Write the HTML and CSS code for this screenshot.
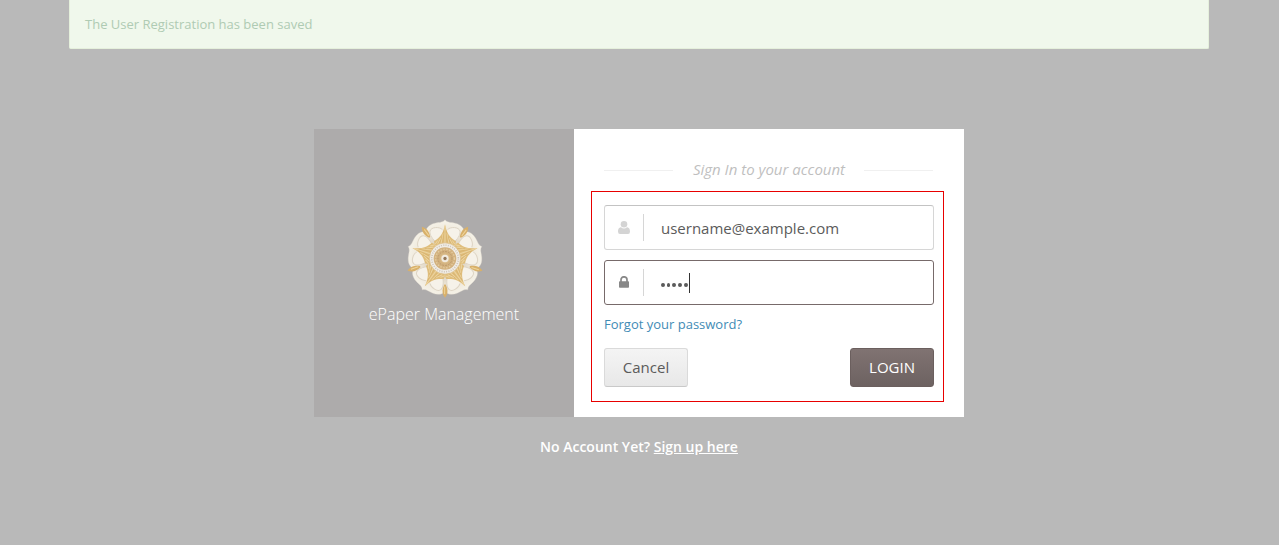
FILE: index.html
```html
<!DOCTYPE html>
<html lang="en">
<head>
<meta charset="utf-8">
<title>ePaper Management</title>
<link rel="stylesheet" href="styles.css">
</head>
<body>
<div class="alert">The User Registration has been saved</div>
<main class="card">
  <section class="brand">
    <svg class="logo" viewBox="-135 -135 270 270" aria-label="Rose emblem">
      <defs>
        <radialGradient id="cream" gradientUnits="userSpaceOnUse" cx="0" cy="0" r="116">
          <stop offset=".45" stop-color="#dfd5c3"/><stop offset=".8" stop-color="#f1ece0"/><stop offset="1" stop-color="#f6f3e9"/>
        </radialGradient>
        <g id="petal">
          <path d="M0-116C7-107 17-109 30-106C48-102 59-91 57-76C54-57 28-35 0-20C-28-35-54-57-57-76C-59-91-48-102-30-106C-17-109-7-107 0-116Z" fill="url(#cream)" stroke="#ded7ca" stroke-width="1"/>
          <path d="M-8-87C-17-96-42-95-45-82C-47-70-37-58-25-47L0-40L25-47C37-58 47-70 45-82C42-95 17-96 8-87L0-70Z" fill="#f6f2e9"/>
          <path d="M-8-87C-17-96-42-95-45-82C-47-70-37-58-25-47M25-47C37-58 47-70 45-82C42-95 17-96 8-87" fill="none" stroke="#ddd4c4" stroke-width="3"/>
        </g>
        <g id="sepal">
          <path d="M0-118C-11-104-8-91-2-78L2-78C8-91 11-104 0-118Z" fill="#d8b06a"/>
          <path d="M1-107V-84" stroke="#efd59c" stroke-width="3"/>
        </g>
        <g id="ray">
          <path d="M0-103C-5-76-14-64-33-52L-30-35H30L33-52C14-64 5-76 0-103Z" fill="#dfbd7b"/>
          <path d="M0-98V-44M-5-76L-12-45M5-76L12-45M-12-62L-22-44M12-62L22-44M-22-54L-30-42M22-54L30-42" fill="none" stroke="#ecd4a0" stroke-width="3"/>
          <path d="M-3-84L-7-46M3-84L7-46M-9-66L-17-45M9-66L17-45" fill="none" stroke="#d2aa62" stroke-width="1.3"/>
        </g>
      </defs>
      <use href="#petal"/><use href="#petal" transform="rotate(72)"/><use href="#petal" transform="rotate(144)"/><use href="#petal" transform="rotate(216)"/><use href="#petal" transform="rotate(288)"/>
      <use href="#sepal" transform="rotate(36)"/><use href="#sepal" transform="rotate(108)"/><use href="#sepal" transform="rotate(180)"/><use href="#sepal" transform="rotate(252)"/><use href="#sepal" transform="rotate(324)"/>
      <use href="#ray"/><use href="#ray" transform="rotate(72)"/><use href="#ray" transform="rotate(144)"/><use href="#ray" transform="rotate(216)"/><use href="#ray" transform="rotate(288)"/>
      <circle r="47" fill="#f0ece5" stroke="#d9b97e" stroke-width="2"/>
      <circle r="40" fill="none" stroke="#cfc6ba" stroke-width="5" stroke-dasharray="3 4"/>
      <circle r="34" fill="#d3b27f"/>
      <circle r="28" fill="none" stroke="#e5cda2" stroke-width="4" stroke-dasharray="4 5"/>
      <circle r="21" fill="none" stroke="#bb986b" stroke-width="3" stroke-dasharray="5 4"/>
      <circle r="15" fill="#d9bb88"/><circle r="11" fill="#f1ebe0"/><circle r="5" fill="#94785a"/>
    </svg>
    <div class="brand-name">ePaper Management</div>
  </section>
  <section class="signin">
    <h1 class="heading"><span>Sign In to your account</span></h1>
    <form class="form">
      <div class="field">
        <span class="icon"><svg class="user" viewBox="0 0 12 13"><path d="M3 6.2C2.2 6.3 0 6.7 0 10.4Q0 13 2 13H10Q12 13 12 10.4C12 6.7 9.8 6.3 9 6.2Q7.6 7.4 6 7.4T3 6.2Z"/><circle cx="6" cy="3.3" r="3.3"/></svg></span>
        <span class="value">username@example.com</span>
      </div>
      <div class="field active">
        <span class="icon"><svg class="lock" viewBox="0 0 10 12"><path d="M2 6V3.8a3 3 0 0 1 6 0V6" fill="none" stroke="currentColor" stroke-width="1.7"/><rect y="5.2" width="10" height="6.6" rx=".8"/></svg></span>
        <span class="value password"><i></i><i></i><i></i><i></i><i></i><b class="caret"></b></span>
      </div>
      <a class="forgot">Forgot your password?</a>
      <div class="actions">
        <button class="button" type="button">Cancel</button>
        <button class="button primary" type="button">LOGIN</button>
      </div>
    </form>
  </section>
</main>
<p class="signup">No Account Yet? <a>Sign up here</a></p>
</body>
</html>
```
FILE: styles.css
```css
* { box-sizing: border-box; }
body {
  margin: 0;
  height: 545px;
  overflow: hidden;
  background: #b9b9b9;
  color: #5b5b5b;
  font: 13px/20px "Open Sans", sans-serif;
}
.alert {
  width: 1140px;
  height: 49px;
  margin: 0 auto 0 69px;
  padding: 14px 15px;
  background: #f0f8ec;
  border: solid #e5f0dc;
  border-width: 0 1px 1px;
  border-radius: 0 0 2px 2px;
  color: #afcbb3;
}
.card {
  display: flex;
  width: 650px;
  height: 288px;
  margin: 80px 0 0 314px;
  background: #fff;
}
.brand {
  display: flex;
  flex-direction: column;
  align-items: center;
  width: 260px;
  padding-top: 84px;
  background: #adabab;
}
.logo { width: 90px; height: 91px; margin-left: 1px; }
.brand-name {
  margin-top: -2px;
  color: #fff;
  font-size: 16px;
  font-weight: 300;
  line-height: 24px;
}
.signin { width: 390px; padding: 30px 20px 0 17px; }
.heading {
  display: flex;
  align-items: center;
  gap: 19px;
  height: 22px;
  margin: 0 11px 10px 13px;
  color: #bfbfbf;
  font-size: 15px;
  font-style: italic;
  font-weight: 400;
  white-space: nowrap;
}
.heading span { padding: 0 0 2px 1px; }
.heading::before, .heading::after {
  content: "";
  flex: 1;
  height: 1px;
  background: #f0f0f0;
}
.form {
  display: flex;
  flex-direction: column;
  height: 211px;
  padding: 13px 9px 0 12px;
  border: 1px solid #e80000;
}
.field {
  display: flex;
  align-items: center;
  flex: none;
  height: 45px;
  margin-bottom: 10px;
  border: 1px solid #d6d6d6;
  border-top-color: #c3c3c3;
  border-radius: 3px;
}
.active { border-color: #776a6a; }
.icon {
  display: flex;
  align-items: center;
  justify-content: center;
  width: 39px;
  height: 27px;
  padding-right: 1px;
  border-right: 1px solid #d6d6d6;
  color: #d4d4d4;
}
.icon svg { fill: currentColor; }
.user { width: 12px; height: 13px; }
.lock { width: 10px; height: 12px; }
.active .icon { padding-bottom: 1px; color: #888; }
.value { padding-left: 17px; font-size: 15px; }
.password { display: flex; align-items: center; gap: 1.9px; }
.password i {
  width: 3.8px;
  height: 4px;
  margin-top: 4px;
  border-radius: 50%;
  background: #5b5b5b;
}
.caret { width: 1px; height: 20px; margin-top: 1px; margin-left: -.3px; background: #333; }
.forgot { align-self: flex-start; margin-top: -1px; color: #428bb5; }
.actions { display: flex; justify-content: space-between; margin-top: 14px; }
.button {
  width: 84px;
  height: 39px;
  padding: 0 0 2px;
  border: 1px solid #dadada;
  border-bottom-color: #c9c9c9;
  border-radius: 3px;
  background: linear-gradient(#f4f4f4, #e8e8e8);
  color: #5b5b5b;
  font: 15px/20px "Open Sans", sans-serif;
}
.primary {
  border-color: #6b5f5e;
  background: linear-gradient(#807372, #6d6261);
  color: #fff;
}
.signup {
  width: 1278px;
  margin: 20px 0 0;
  color: #fff;
  font-weight: 600;
  font-size: 14px;
  text-align: center;
}
.signup a { text-decoration: underline; }
```
